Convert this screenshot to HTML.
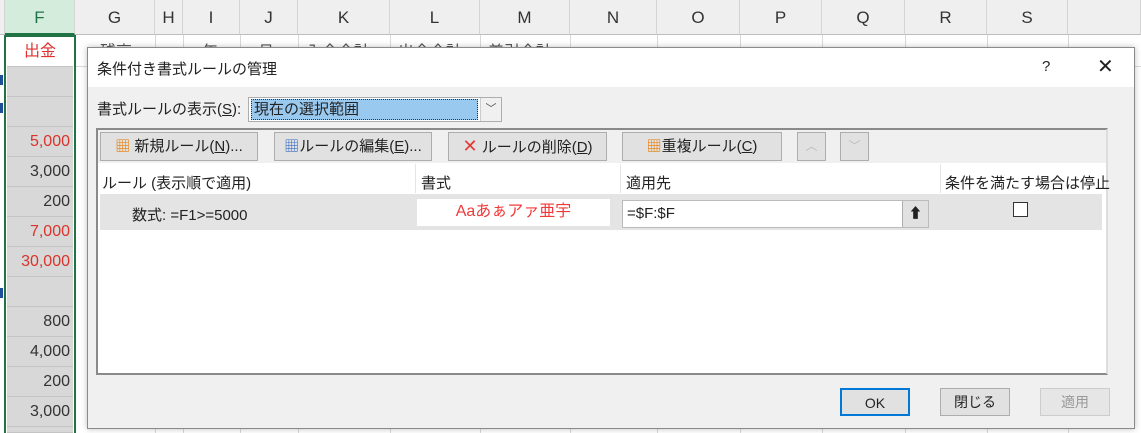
<!DOCTYPE html>
<html style="width:1141px;height:433px;overflow:hidden"><head><meta charset="utf-8"><style>
*{margin:0;padding:0;box-sizing:border-box}
body{width:1141px;height:433px;overflow:hidden;background:#fff;position:relative;font-family:"Liberation Sans","Noto Sans CJK JP",sans-serif;color:#222}
.a{position:absolute}
.ch{position:absolute;top:0;height:35px;border-right:1px solid #d4d4d4;border-bottom:1px solid #bdbdbd;background:#efefef;text-align:center;line-height:36px;font-size:17px;color:#333}
.hl{position:absolute;left:75px;width:1066px;height:1px;background:#d9d9d9}
.vl{position:absolute;top:35px;width:1px;height:398px;background:#d9d9d9}
.fc{position:absolute;left:7px;width:66px;height:30px;background:#d8d8d8;border-bottom:1px solid #c4c4c4;text-align:right;padding-right:3px;font-size:16px;line-height:30px;color:#333}
.r{color:#d9342b}
.btn{position:absolute;top:132px;height:29px;background:#e1e1e1;border:1px solid #adadad;font-size:15px;line-height:27px;text-align:center;color:#222}
.bb{position:absolute;top:388px;width:70px;height:28px;background:#e1e1e1;border:1px solid #adadad;font-size:14px;line-height:26px;text-align:center}
u{text-decoration:underline}
</style></head><body>
<div class="ch" style="left:0;width:5px"></div>
<div class="ch" style="left:5px;width:70px;background:#d3ecdc;border-bottom:2px solid #217346;color:#217346">F</div>
<div class="ch" style="left:75px;width:80px">G</div>
<div class="ch" style="left:155px;width:28px">H</div>
<div class="ch" style="left:183px;width:57px">I</div>
<div class="ch" style="left:240px;width:58px">J</div>
<div class="ch" style="left:298px;width:92px">K</div>
<div class="ch" style="left:390px;width:90px">L</div>
<div class="ch" style="left:480px;width:90px">M</div>
<div class="ch" style="left:570px;width:87px">N</div>
<div class="ch" style="left:657px;width:83px">O</div>
<div class="ch" style="left:740px;width:82px">P</div>
<div class="ch" style="left:822px;width:83px">Q</div>
<div class="ch" style="left:905px;width:82px">R</div>
<div class="ch" style="left:987px;width:81px">S</div>
<div class="ch" style="left:1068px;width:73px"></div>
<div class="vl" style="left:155px"></div><div class="vl" style="left:183px"></div><div class="vl" style="left:240px"></div><div class="vl" style="left:298px"></div><div class="vl" style="left:390px"></div><div class="vl" style="left:480px"></div><div class="vl" style="left:570px"></div><div class="vl" style="left:657px"></div><div class="vl" style="left:740px"></div><div class="vl" style="left:822px"></div><div class="vl" style="left:905px"></div><div class="vl" style="left:987px"></div><div class="vl" style="left:1068px"></div>
<div class="hl" style="top:66px"></div>
<div class="a" style="left:100px;top:38px;font-size:16px;color:#555">残高</div>
<div class="a" style="left:202px;top:38px;font-size:16px;color:#555">年</div>
<div class="a" style="left:258px;top:38px;font-size:16px;color:#555">月</div>
<div class="a" style="left:306px;top:38px;font-size:16px;color:#555">入金合計</div>
<div class="a" style="left:398px;top:38px;font-size:16px;color:#555">出金合計</div>
<div class="a" style="left:488px;top:38px;font-size:16px;color:#555">差引合計</div>
<div class="fc" style="top:37px;background:#fff;text-align:center;padding:0;color:#e03030">出金</div>
<div class="fc" style="top:67px"></div>
<div class="fc" style="top:97px"></div>
<div class="fc r" style="top:127px">5,000</div>
<div class="fc" style="top:157px">3,000</div>
<div class="fc" style="top:187px">200</div>
<div class="fc r" style="top:217px">7,000</div>
<div class="fc r" style="top:247px">30,000</div>
<div class="fc" style="top:277px"></div>
<div class="fc" style="top:307px">800</div>
<div class="fc" style="top:337px">4,000</div>
<div class="fc" style="top:367px">200</div>
<div class="fc" style="top:397px">3,000</div>
<div class="fc" style="top:427px;height:6px"></div>
<div class="a" style="left:4px;top:35px;width:72px;height:398px;border:2px solid #217346;border-bottom:none"></div>
<div class="a" style="left:0;top:75px;width:3px;height:10px;background:#1f4e9a"></div>
<div class="a" style="left:0;top:103px;width:3px;height:10px;background:#1f4e9a"></div>
<div class="a" style="left:0;top:288px;width:3px;height:10px;background:#1f4e9a"></div>

<div class="a" style="left:87px;top:47px;width:1048px;height:382px;background:#f0f0f0;border:1px solid #8a8a8a;box-shadow:0 0 6px rgba(0,0,0,.25)"></div>
<div class="a" style="left:88px;top:48px;width:1046px;height:39px;background:#fff"></div>
<div class="a" style="left:97px;top:58px;font-size:15px;color:#222">条件付き書式ルールの管理</div>
<div class="a" style="left:1042px;top:58px;font-size:15px">?</div>
<div class="a" style="left:1097px;top:54px;font-size:20px;font-weight:300">✕</div>
<div class="a" style="left:97px;top:98px;font-size:15px">書式ルールの表示(<u>S</u>):</div>
<div class="a" style="left:248px;top:97px;width:254px;height:25px;background:#fff;border:1px solid #adadad"></div>
<div class="a" style="left:251px;top:99px;width:227px;height:21px;background:#99c9ef;border:1px dotted #333;font-size:15px;line-height:19px;padding-left:2px">現在の選択範囲</div>
<div class="a" style="left:480px;top:98px;width:21px;height:23px;background:#f0f0f0;border-left:1px solid #ccc;text-align:center;font-size:11px;line-height:22px;color:#555">﹀</div>
<div class="a" style="left:96px;top:128px;width:1012px;height:247px;border:2px solid #8a8a8a;border-right-color:#ddd;background:#fff"></div>
<div class="a" style="left:98px;top:130px;width:1008px;height:33px;background:#f0f0f0"></div>
<div class="btn" style="left:100px;width:158px"><span style="color:#e87a00">▦</span> 新規ルール(<u>N</u>)...</div>
<div class="btn" style="left:274px;width:158px"><span style="color:#3a6fc4">▦</span>ルールの編集(<u>E</u>)...</div>
<div class="btn" style="left:448px;width:159px"><span style="color:#e53935;font-size:18px">✕</span> ルールの削除(<u>D</u>)</div>
<div class="btn" style="left:622px;width:160px"><span style="color:#e87a00">▦</span>重複ルール(<u>C</u>)</div>
<div class="btn" style="left:797px;width:29px;color:#bbb;font-size:12px">︿</div>
<div class="btn" style="left:840px;width:29px;color:#bbb;font-size:12px">﹀</div>
<div class="a" style="left:102px;top:172px;font-size:15px">ルール (表示順で適用)</div>
<div class="a" style="left:415px;top:164px;width:1px;height:29px;background:#e5e5e5"></div>
<div class="a" style="left:620px;top:164px;width:1px;height:29px;background:#e5e5e5"></div>
<div class="a" style="left:940px;top:164px;width:1px;height:29px;background:#e5e5e5"></div>
<div class="a" style="left:421px;top:172px;font-size:15px">書式</div>
<div class="a" style="left:626px;top:172px;font-size:15px">適用先</div>
<div class="a" style="left:945px;top:172px;font-size:15px">条件を満たす場合は停止</div>
<div class="a" style="left:100px;top:194px;width:1002px;height:36px;background:#e4e4e4"></div>
<div class="a" style="left:132px;top:204px;font-size:15px">数式: =F1&gt;=5000</div>
<div class="a" style="left:417px;top:199px;width:193px;height:27px;background:#fff;color:#f03a3a;font-size:16px;text-align:center;line-height:26px">Aaあぁアァ亜宇</div>
<div class="a" style="left:622px;top:200px;width:307px;height:28px;background:#fff;border:1px solid #bbb;font-size:15px;line-height:26px;padding-left:4px">=$F:$F</div>
<div class="a" style="left:902px;top:201px;width:26px;height:26px;background:#e1e1e1;border-left:1px solid #adadad;text-align:center;font-size:14px;font-weight:bold;line-height:24px">⬆</div>
<div class="a" style="left:1013px;top:202px;width:15px;height:15px;border:1px solid #333;background:#fff"></div>
<div class="bb" style="left:840px;border:2px solid #0078d7">OK</div>
<div class="bb" style="left:940px">閉じる</div>
<div class="bb" style="left:1040px;color:#999;border-color:#ccc;background:#e6e6e6">適用</div>
</body></html>
